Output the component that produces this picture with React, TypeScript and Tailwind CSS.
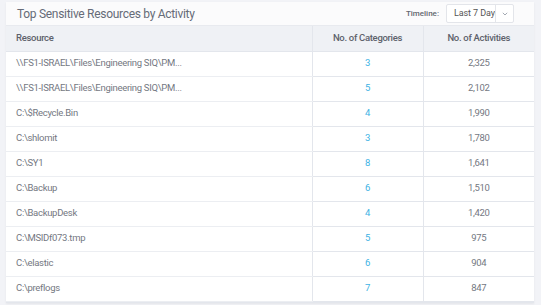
import React from "react";

interface Row {
    resource: string;
    categories: number;
    activities: string;
}

const rows: Row[] = [
    { resource: "\\\\FS1-ISRAEL\\Files\\Engineering SIQ\\PM...", categories: 3, activities: "2,325" },
    { resource: "\\\\FS1-ISRAEL\\Files\\Engineering SIQ\\PM...", categories: 5, activities: "2,102" },
    { resource: "C:\\$Recycle.Bin", categories: 4, activities: "1,990" },
    { resource: "C:\\shlomit", categories: 3, activities: "1,780" },
    { resource: "C:\\SY1", categories: 8, activities: "1,641" },
    { resource: "C:\\Backup", categories: 6, activities: "1,510" },
    { resource: "C:\\BackupDesk", categories: 4, activities: "1,420" },
    { resource: "C:\\MSIDf073.tmp", categories: 5, activities: "975" },
    { resource: "C:\\elastic", categories: 6, activities: "904" },
    { resource: "C:\\preflogs", categories: 7, activities: "847" },
];

const App: React.FC = () => {
    return (
        <div className="w-[541px] h-[305px] bg-[#f2f3f7] pt-[2px] pl-[6px] pr-[7px] overflow-hidden font-['Roboto',sans-serif]">
            <div className="bg-white border-b border-[#e3e6ec] shadow-[0_1px_2px_rgba(0,0,0,0.06)]">
                <div className="h-[24px] bg-[#fbfbfc] flex items-center justify-between pl-[11px] pr-[20px] border-b border-[#e8eaef]">
                    <span className="text-[12px] tracking-[-0.3px] text-[#666b78]">Top Sensitive Resources by Activity</span>
                    <div className="flex items-center gap-[7px]">
                        <span className="text-[8px] font-medium text-[#63676f]">Timeline:</span>
                        <div className="flex h-[19px] bg-white border border-[#e3e5ea] rounded-[2px]">
                            <span className="w-[49px] flex items-center pl-[7px] text-[9px] tracking-[-0.1px] text-[#555] overflow-hidden whitespace-nowrap border-r border-[#e3e5ea]">Last 7 Days</span>
                            <span className="w-[17px] flex items-center justify-center">
                                <svg width="6" height="4" viewBox="0 0 6 4" fill="none" stroke="#9aa0aa" strokeWidth="0.9">
                                    <path d="M0.8 0.8L3 3L5.2 0.8" />
                                </svg>
                            </span>
                        </div>
                    </div>
                </div>
                <table className="w-full border-collapse text-[9.5px] tracking-[-0.3px]">
                    <thead>
                        <tr className="h-[25px] bg-[#eff1f5] text-[#5d616b]">
                            <th className="text-left font-medium pl-[10px] border-b border-[#e3e6ec]">Resource</th>
                            <th className="w-[111px] font-medium border-l border-b border-[#e3e6ec]">No. of Categories</th>
                            <th className="w-[111px] font-medium border-l border-b border-[#e3e6ec]">No. of Activities</th>
                        </tr>
                    </thead>
                    <tbody>
                        {rows.map((row, index) => (
                            <tr key={index} className="h-[25px] text-[#747882]">
                                <td className="pl-[10px] border-b border-[#eceef2]">{row.resource}</td>
                                <td className="text-center text-[#3eb3e4] border-l border-b border-[#e3e6ec]">{row.categories}</td>
                                <td className="text-center border-l border-b border-[#e3e6ec]">{row.activities}</td>
                            </tr>
                        ))}
                    </tbody>
                </table>
            </div>
        </div>
    );
};

export default App;
